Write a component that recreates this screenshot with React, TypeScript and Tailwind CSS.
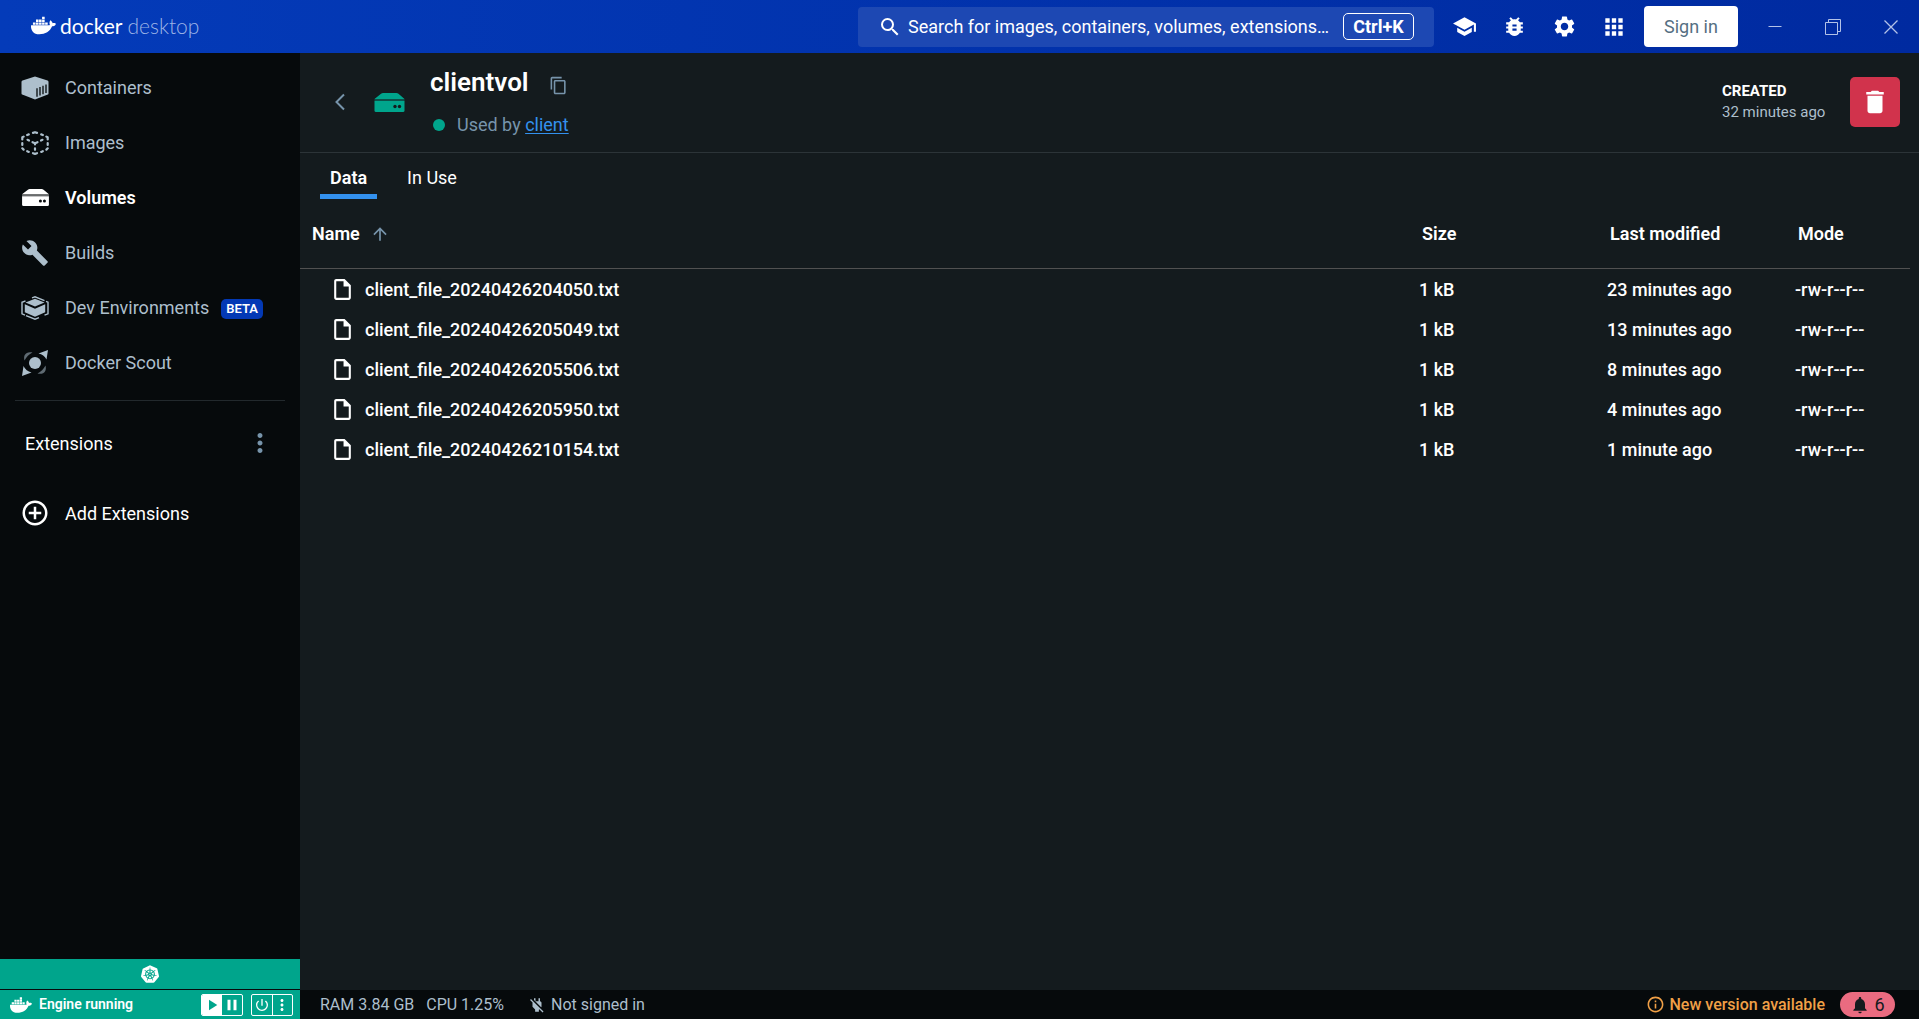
import type { ReactNode } from "react";
import {
  MdSchool, MdBugReport, MdSettings, MdApps, MdDelete, MdContentCopy, MdArrowUpward, MdSearch,
  MdMoreVert, MdInfoOutline, MdNotifications, MdPowerOff, MdBuild, MdAddCircleOutline,
  MdPlayArrow, MdPause, MdPowerSettingsNew, MdOutlineInsertDriveFile,
} from "react-icons/md";
import { FaDocker } from "react-icons/fa";
import { SiKubernetes } from "react-icons/si";

function ContainerIcon() {
  return (
    <svg viewBox="0 0 28 24" className="h-6 w-7" aria-hidden="true">
      <path d="M14 0.5 26.500 4.600Q27.500 5 27.500 6V17.500Q27.500 18.300 26.800 18.600L14 23.500 1.200 18.600Q.500 18.300 .500 17.500V6Q.500 5 1.500 4.600Z" fill="#adbfcc" />
      <path d="M16 12.200V20.700M19 11V19.500M22 9.800V18.300M25 8.600V17" stroke="#060a0c" strokeWidth="1.300" fill="none" />
    </svg>
  );
}

function ImageIcon() {
  return (
    <svg viewBox="0 0 28 24" className="h-6 w-7" aria-hidden="true">
      <g fill="none" stroke="#adbfcc" strokeWidth="2.200" strokeLinecap="round" strokeLinejoin="round">
        <path d="M12 1.900 14 1.200 16 1.900M20.200 3.400 21.800 4M7.800 3.400 6.200 4M1.300 8.500V6.300L2.600 5.600M26.700 8.500V6.300L25.400 5.600M1.300 12V14M26.700 12V14M1.300 17.300 2.600 18.600M26.700 17.300 25.400 18.600M12 22.200 14 22.900 16 22.200M20.200 20.900 21.800 20.200M7.800 20.900 6.200 20.200" />
        <path d="M6.500 8.800 8 9.500M11.500 11.200 14 12.300 16.500 11.200M20 9.500 21.500 8.800M14 12.500V13.500M14 17.300V18.800" />
      </g>
    </svg>
  );
}

function DriveIcon({ className, gap }: { className: string; gap: string }) {
  return (
    <svg viewBox="0 0 30 19" className={className} aria-hidden="true">
      <path d="M8.500 0H22Q23 0 24 .8L30 6H0L6.500 .8Q7.500 0 8.500 0Z" fill="currentColor" />
      <path d="M0 8H30V17.500Q30 19 28.500 19H1.500Q0 19 0 17.500Z" fill="currentColor" />
      <path d="M0 7H30" stroke="currentColor" strokeOpacity="0.4" strokeWidth="2" />
      <circle cx="20.500" cy="13.500" r="1.700" fill={gap} />
      <circle cx="25" cy="13.500" r="1.700" fill={gap} />
    </svg>
  );
}

function DevIcon() {
  return (
    <svg viewBox="0 0 28 24" className="h-6 w-7" aria-hidden="true">
      <path d="M14 2.800 23.500 6.500 14 10.600 4.500 6.500Z" fill="#adbfcc" />
      <path d="M3.800 8.300 14 12.700 24.200 8.300V16.200L14 20.700 3.800 16.200Z" fill="#adbfcc" />
      <g fill="none" stroke="#adbfcc" strokeWidth="1.400">
        <path d="M11 1.800 14 .800 23.500 4.600M4.500 4.800 1 6.300V17.800L4 19.100M25 5.400 27 6.200V17.800L23.500 19.200M5 19.600 14 23.200 18 21.600" />
      </g>
    </svg>
  );
}

function ScoutIcon() {
  return (
    <svg viewBox="0 0 26 26" className="size-[26px]" aria-hidden="true">
      <circle cx="13" cy="13" r="6" fill="#adbfcc" />
      <path d="M26 0 24.500 9.500A12 12 0 0 0 16.500 3.500ZM0 26 1.500 16A12 12 0 0 0 9.500 22.500Z" fill="#adbfcc" />
      <path d="M2.500 10.500C1 5 4 1 10.500 2.500 7 4 4.500 7 2.500 10.500ZM23.500 15.500C25 21 22 25 15.500 23.500 19 22 21.500 19 23.500 15.500Z" fill="#5f6b73" />
    </svg>
  );
}

function NavItem({ icon, label, active, badge }: { icon: ReactNode; label: string; active?: boolean; badge?: string }) {
  return (
    <li>
      <a
        href="#"
        className={
          active
            ? "flex h-[55px] items-center pl-[21px] text-[18px] font-semibold text-white"
            : "flex h-[55px] items-center pl-[21px] text-[18px] text-[#adbfcc]"
        }
      >
        <span className="flex w-7 shrink-0 justify-center">{icon}</span>
        <span className="ml-4">{label}</span>
        {badge && (
          <span className="mt-0.5 ml-3 flex h-5 items-center rounded-[5px] bg-[#0339b5] px-[5px] text-[13px] font-semibold text-white">
            {badge}
          </span>
        )}
      </a>
    </li>
  );
}

const files = [
  { name: "client_file_20240426204050.txt", size: "1 kB", modified: "23 minutes ago", mode: "-rw-r--r--" },
  { name: "client_file_20240426205049.txt", size: "1 kB", modified: "13 minutes ago", mode: "-rw-r--r--" },
  { name: "client_file_20240426205506.txt", size: "1 kB", modified: "8 minutes ago", mode: "-rw-r--r--" },
  { name: "client_file_20240426205950.txt", size: "1 kB", modified: "4 minutes ago", mode: "-rw-r--r--" },
  { name: "client_file_20240426210154.txt", size: "1 kB", modified: "1 minute ago", mode: "-rw-r--r--" },
];

function TopBar() {
  return (
    <header className="flex h-[53px] shrink-0 items-center bg-linear-to-r from-[#043bb9] to-[#002aa0] text-white">
      <div className="flex items-center pb-0.5 pl-[31px]">
        <FaDocker className="size-[25px]" />
        <span className="ml-1 font-['Lato',sans-serif] text-[21px] leading-6">
          docker <span className="font-light text-[#9db4e6]">desktop</span>
        </span>
      </div>
      <div className="ml-auto flex items-center">
        <label className="flex h-10 w-[576px] items-center rounded bg-[#1d48b3] pl-5">
          <MdSearch className="size-6 shrink-0" aria-label="Search" />
          <input
            type="text"
            placeholder="Search for images, containers, volumes, extensions…"
            className="ml-[6px] w-[435px] shrink-0 bg-transparent text-[18px] text-white placeholder-white outline-none"
          />
          <kbd className="flex h-[27px] w-[71px] items-center justify-center rounded-[5px] border border-white font-[Roboto,sans-serif] text-[18px] font-bold">
            Ctrl+K
          </kbd>
        </label>
        <div className="ml-[5px] flex">
          <button aria-label="Learning center" className="flex w-[50px] justify-center"><MdSchool className="size-[25px]" /></button>
          <button aria-label="Troubleshoot" className="flex w-[50px] justify-center"><MdBugReport className="size-[25px]" /></button>
          <button aria-label="Settings" className="flex w-[50px] justify-center"><MdSettings className="size-[25px]" /></button>
          <button aria-label="Extensions" className="flex w-[50px] justify-center"><MdApps className="size-[26px]" /></button>
        </div>
        <button className="ml-[5px] h-[41px] w-[94px] rounded bg-white text-[18px] text-[#556f82]">Sign in</button>
        <div className="ml-2 flex text-[#b3c2e8]">
          <button aria-label="Minimize" className="flex w-[58px] justify-center">
            <svg viewBox="0 0 16 16" className="size-4" fill="none" stroke="currentColor"><path d="M1.500 7.500H14.500" /></svg>
          </button>
          <button aria-label="Restore" className="flex w-[58px] justify-center">
            <svg viewBox="0 0 16 16" className="size-4" fill="none" stroke="currentColor"><path d="M.500 3.500H12.500V15.500H.500ZM3.500 3.500V.500H15.500V12.500H12.500" /></svg>
          </button>
          <button aria-label="Close" className="flex w-[57px] justify-center">
            <svg viewBox="0 0 16 16" className="size-4" fill="none" stroke="currentColor" strokeWidth="1.300"><path d="M1.500 1.500 14.500 14.500M14.500 1.500 1.500 14.500" /></svg>
          </button>
        </div>
      </div>
    </header>
  );
}

function Sidebar() {
  return (
    <aside className="flex w-[300px] shrink-0 flex-col bg-[#060a0c]">
      <nav className="pt-[7px]" aria-label="Main">
        <ul>
          <NavItem icon={<ContainerIcon />} label="Containers" />
          <NavItem icon={<ImageIcon />} label="Images" />
          <NavItem icon={<DriveIcon className="h-[17px] w-[27px]" gap="#060a0c" />} label="Volumes" active />
          <NavItem icon={<MdBuild className="size-7" />} label="Builds" />
          <NavItem icon={<DevIcon />} label="Dev Environments" badge="BETA" />
          <NavItem icon={<ScoutIcon />} label="Docker Scout" />
        </ul>
      </nav>
      <hr className="mx-[15px] mt-[10px] border-[#22292d]" />
      <div className="mt-[22px] flex h-10 items-center justify-between pr-[25px] pl-[25px] text-[18px] text-white">
        <h2>Extensions</h2>
        <button aria-label="Extensions menu" className="text-[#7794ab]"><MdMoreVert className="size-[30px]" /></button>
      </div>
      <button className="mt-[30px] flex h-10 items-center pl-[20px] text-[18px] text-white">
        <MdAddCircleOutline className="size-[30px]" />
        <span className="ml-[15px]">Add Extensions</span>
      </button>
      <div className="mt-auto text-white">
        <div className="flex h-[30px] items-center justify-center bg-[#00a58c]">
          <SiKubernetes className="size-[18px]" aria-label="Kubernetes running" />
        </div>
        <div className="mt-px flex h-[29px] items-center bg-[#00a58c] pr-[7px] pl-[10px]">
          <FaDocker className="size-[22px]" />
          <span className="ml-[7px] text-[14px] font-semibold">Engine running</span>
          <div className="ml-auto flex h-[22px] w-[42px] overflow-hidden rounded-xs border border-white">
            <button aria-label="Start" className="flex flex-1 items-center justify-center bg-white text-[#00a58c]"><MdPlayArrow className="size-[18px]" /></button>
            <button aria-label="Pause" className="flex flex-1 items-center justify-center"><MdPause className="size-[18px]" /></button>
          </div>
          <div className="ml-2 flex h-[22px] w-[42px] rounded-xs border border-white">
            <button aria-label="Quit" className="flex flex-1 items-center justify-center border-r border-white"><MdPowerSettingsNew className="size-4" /></button>
            <button aria-label="Engine menu" className="flex flex-1 items-center justify-center"><MdMoreVert className="size-[18px]" /></button>
          </div>
        </div>
      </div>
    </aside>
  );
}

function VolumeHeader() {
  return (
    <div className="flex h-[100px] shrink-0 items-center border-b border-[#2c3438] pr-[19px] pb-px pl-[34px]">
      <button aria-label="Back">
        <svg viewBox="0 0 12 18" className="h-[18px] w-3" fill="none" stroke="#7794ab" strokeWidth="2"><path d="M10 1.500 2.500 9 10 16.500" /></svg>
      </button>
      <DriveIcon className="ml-7 h-[19px] w-[31px] text-[#00a58c]" gap="#141b1e" />
      <div className="ml-[25px]">
        <div className="flex h-[30px] items-center">
          <h1 className="text-[26px] leading-[30px] font-semibold text-white">clientvol</h1>
          <button aria-label="Copy name" className="mt-1.5 ml-5 text-[#7794ab]"><MdContentCopy className="size-[19px]" /></button>
        </div>
        <p className="mt-4 flex items-center text-[18px] leading-6 text-[#7794ab]">
          <span className="mr-3 ml-[3px] size-3 rounded-full bg-[#00a58c]" />
          Used by&nbsp;<a href="#" className="text-[#3391ee] underline underline-offset-2">client</a>
        </p>
      </div>
      <div className="ml-auto w-[108px]">
        <h2 className="text-[15px] leading-[21px] font-bold text-white">CREATED</h2>
        <p className="text-[15px] leading-[21px] text-[#adbfcc]">32 minutes ago</p>
      </div>
      <button aria-label="Delete volume" className="ml-5 flex size-[50px] items-center justify-center rounded-[5px] bg-[#d1334c] text-white">
        <MdDelete className="size-[30px]" />
      </button>
    </div>
  );
}

function FileTable() {
  return (
    <div className="pr-[9px]">
      <table className="w-full table-fixed border-separate border-spacing-0 text-left text-[18px] text-white">
        <colgroup>
          <col />
          <col className="w-[188px]" />
          <col className="w-[188px]" />
          <col className="w-[128px]" />
        </colgroup>
        <thead>
          <tr className="h-[70px]">
            <th className="border-b border-[#515151] pl-3 font-semibold" aria-sort="ascending">
              <button className="flex items-center">
                Name <MdArrowUpward className="ml-[10px] size-5 text-[#7794ab]" />
              </button>
            </th>
            <th className="border-b border-[#515151] pl-4 font-semibold">Size</th>
            <th className="border-b border-[#515151] pl-4 font-semibold">Last modified</th>
            <th className="border-b border-[#515151] pl-4 font-semibold">Mode</th>
          </tr>
        </thead>
        <tbody>
          {files.map((f) => (
            <tr key={f.name} className="h-10 font-medium">
              <td className="pt-px pl-[30px]">
                <span className="flex items-center">
                  <MdOutlineInsertDriveFile className="size-[25px]" />
                  <span className="ml-[10px]">{f.name}</span>
                </span>
              </td>
              <td className="pt-px pl-[13px]">{f.size}</td>
              <td className="pt-px pl-[13px]">{f.modified}</td>
              <td className="pt-px pl-[13px]">{f.mode}</td>
            </tr>
          ))}
        </tbody>
      </table>
    </div>
  );
}

export default function App() {
  return (
    <div className="flex min-h-screen flex-col bg-[#141b1e] font-[Roboto,sans-serif]">
      <TopBar />
      <div className="flex flex-1">
        <Sidebar />
        <div className="flex min-w-0 flex-1 flex-col">
          <main className="flex-1">
            <VolumeHeader />
            <div role="tablist" className="flex h-[46px] pl-5 text-[18px] text-white">
              <button role="tab" aria-selected="true" className="border-b-5 border-[#3391ee] px-[10px] pt-2 font-semibold">Data</button>
              <button role="tab" aria-selected="false" className="ml-5 border-b-5 border-transparent px-[10px] pt-2">In Use</button>
            </div>
            <FileTable />
          </main>
          <footer className="flex h-[29px] items-center bg-[#060a0c] pr-6 pl-5 text-[16px] text-[#adbfcc]">
            <span>RAM 3.84 GB</span>
            <span className="ml-3">CPU 1.25%</span>
            <MdPowerOff className="ml-6 size-[18px]" />
            <span className="ml-[5px]">Not signed in</span>
            <a href="#" className="ml-auto flex items-center font-medium text-[#f0a047]">
              <MdInfoOutline className="size-[19px]" />
              <span className="ml-[5px]">New version available</span>
            </a>
            <button aria-label="6 notifications" className="ml-[15px] flex h-[25px] w-[55px] items-center justify-center rounded-full bg-[#ea6b80] text-[18px] text-[#141b1e]">
              <MdNotifications className="mr-1 size-5" />6
            </button>
          </footer>
        </div>
      </div>
    </div>
  );
}
